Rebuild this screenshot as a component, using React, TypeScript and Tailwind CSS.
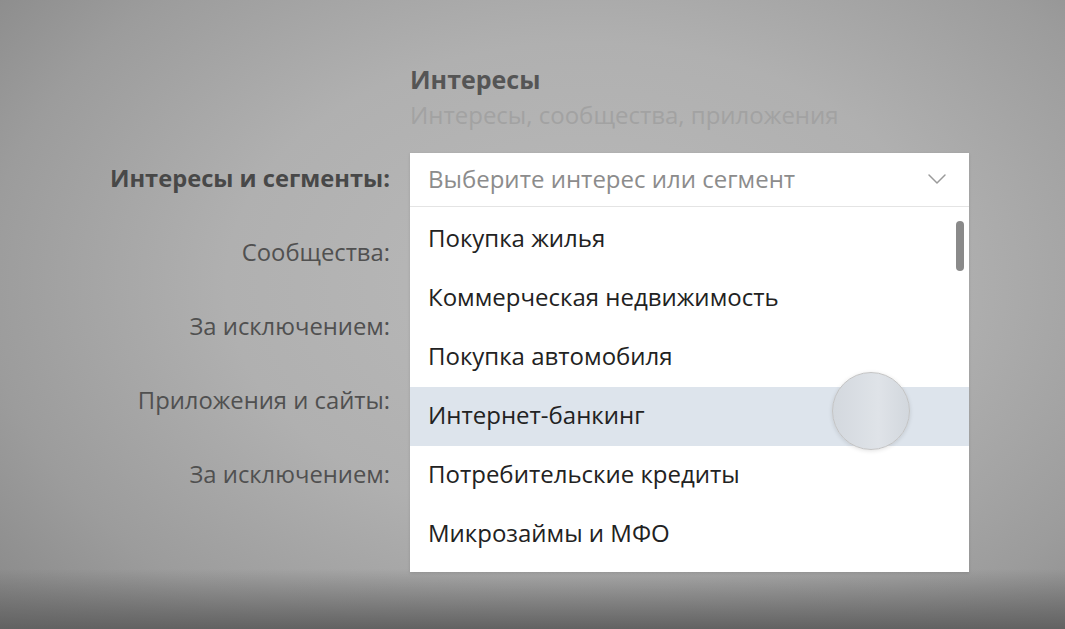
import { ChevronDown } from "lucide-react";

const labels = [
  { text: "Интересы и сегменты:", bold: true },
  { text: "Сообщества:" },
  { text: "За исключением:" },
  { text: "Приложения и сайты:" },
  { text: "За исключением:" },
];

const options = [
  "Покупка жилья",
  "Коммерческая недвижимость",
  "Покупка автомобиля",
  "Интернет-банкинг",
  "Потребительские кредиты",
  "Микрозаймы и МФО",
];

export default function App() {
  return (
    <div
      className="relative h-[629px] w-[1065px] overflow-hidden bg-[radial-gradient(ellipse_75%_85%_at_55%_45%,#bababa_0%,#b0b0b0_45%,#9c9c9c_75%,#858585_100%)]"
      style={{ fontFamily: "'Open Sans', 'Noto Sans', sans-serif" }}
    >
      <div className="pointer-events-none absolute inset-x-0 bottom-0 h-[60px] bg-gradient-to-b from-transparent to-[#626262]" />

      <div className="relative pt-[64px]">
        <div className="ml-[410px]">
          <h2 className="text-[25px] font-bold leading-[30px] text-[#555555]">Интересы</h2>
          <p className="mt-[7px] text-[24px] leading-[28px] text-[#a2a2a2]">
            Интересы, сообщества, приложения
          </p>
        </div>

        <div className="mt-[14px] grid grid-cols-[390px_559px] gap-x-[20px]">
          <div className="flex flex-col">
            {labels.map((l, i) => (
              <div
                key={i}
                className={
                  l.bold
                    ? "flex h-[74px] items-center justify-end pb-[2px] text-[23.7px] font-bold text-[#484848]"
                    : "flex h-[74px] items-center justify-end pb-[2px] text-[23.8px] text-[#505050]"
                }
              >
                {l.text}
              </div>
            ))}
          </div>

          <div className="mt-[10px] h-[419px] bg-white shadow-[0_1px_3px_rgba(0,0,0,0.12)]">
            <div className="flex h-[54px] items-center justify-between border-b border-[#e4e4e4] pb-[2px] pl-[18px] pr-[16px]">
              <span className="text-[24px] text-[#8c8c8c]">Выберите интерес или сегмент</span>
              <ChevronDown className="h-[32px] w-[32px] text-[#9a9a9a]" strokeWidth={1.1} />
            </div>
            <div className="relative pt-[3px]">
              {options.map((o, i) => (
                <div
                  key={o}
                  className={
                    i === 3
                      ? "flex h-[59px] items-center bg-[#dde4ec] pb-[3px] pl-[18px] text-[24px] text-[#222222]"
                      : "flex h-[59px] items-center pb-[3px] pl-[18px] text-[24px] text-[#222222]"
                  }
                >
                  {o}
                </div>
              ))}
              <div className="absolute right-[5px] top-[14px] h-[50px] w-[8px] rounded-full bg-[#8a8a8a]" />
              <div className="absolute left-[422px] top-[165px] h-[78px] w-[78px] rounded-full border border-[#c4c4c4] bg-[linear-gradient(90deg,#d3d8de,#dfe3e8_60%,#d2d7dd)] shadow-[0_1px_4px_rgba(0,0,0,0.12)]" />
            </div>
          </div>
        </div>
      </div>
    </div>
  );
}
